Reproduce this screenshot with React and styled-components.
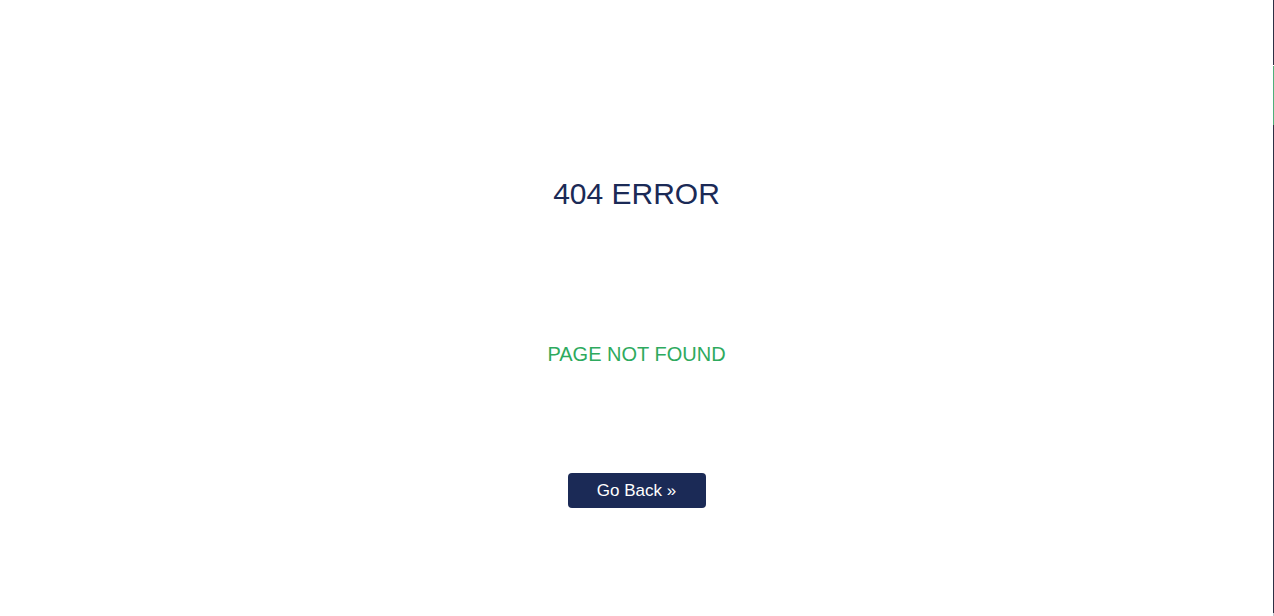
import styled, { createGlobalStyle } from 'styled-components'

const GlobalStyle = createGlobalStyle`
  html, body {
    margin: 0;
    padding: 0;
    background: #ffffff;
    font-family: "Liberation Sans", Arial, sans-serif;
  }
`

const Page = styled.div`
  display: flex;
  height: 616px;
  overflow: hidden;
`

const Main = styled.main`
  flex: 1;
  display: flex;
  flex-direction: column;
  align-items: center;
  padding-top: 176px;
`

const Title = styled.h1`
  margin: 0;
  font-size: 30px;
  line-height: 36px;
  font-weight: 400;
  color: #1b2a56;
`

const Subtitle = styled.h2`
  margin: 130px 0 0;
  font-size: 20px;
  line-height: 24px;
  font-weight: 400;
  color: #2eaa5e;
`

const BackButton = styled.button`
  margin-top: 107px;
  width: 138px;
  height: 35px;
  border: none;
  border-radius: 4px;
  background: #1b2a56;
  color: #ffffff;
  font-family: inherit;
  font-size: 17px;
  cursor: pointer;
`

const Rail = styled.div`
  width: 1px;
  display: flex;
  flex-direction: column;
`

const RailPart = styled.div`
  height: ${p => p.$h}px;
  flex: ${p => (p.$h ? 'none' : 1)};
  background: ${p => p.$c};
`

const App = () => {
  return (
    <>
      <GlobalStyle />
      <Page>
        <Main>
          <Title>404 ERROR</Title>
          <Subtitle>PAGE NOT FOUND</Subtitle>
          <BackButton>Go Back »</BackButton>
        </Main>
        <Rail>
          <RailPart $h={65} $c='#2d3044' />
          <RailPart $h={1} $c='#ffffff' />
          <RailPart $h={59} $c='#4fae7a' />
          <RailPart $c='#2d3044' />
          <RailPart $h={3} $c='#c9cad2' />
        </Rail>
      </Page>
    </>
  )
}

export default App
